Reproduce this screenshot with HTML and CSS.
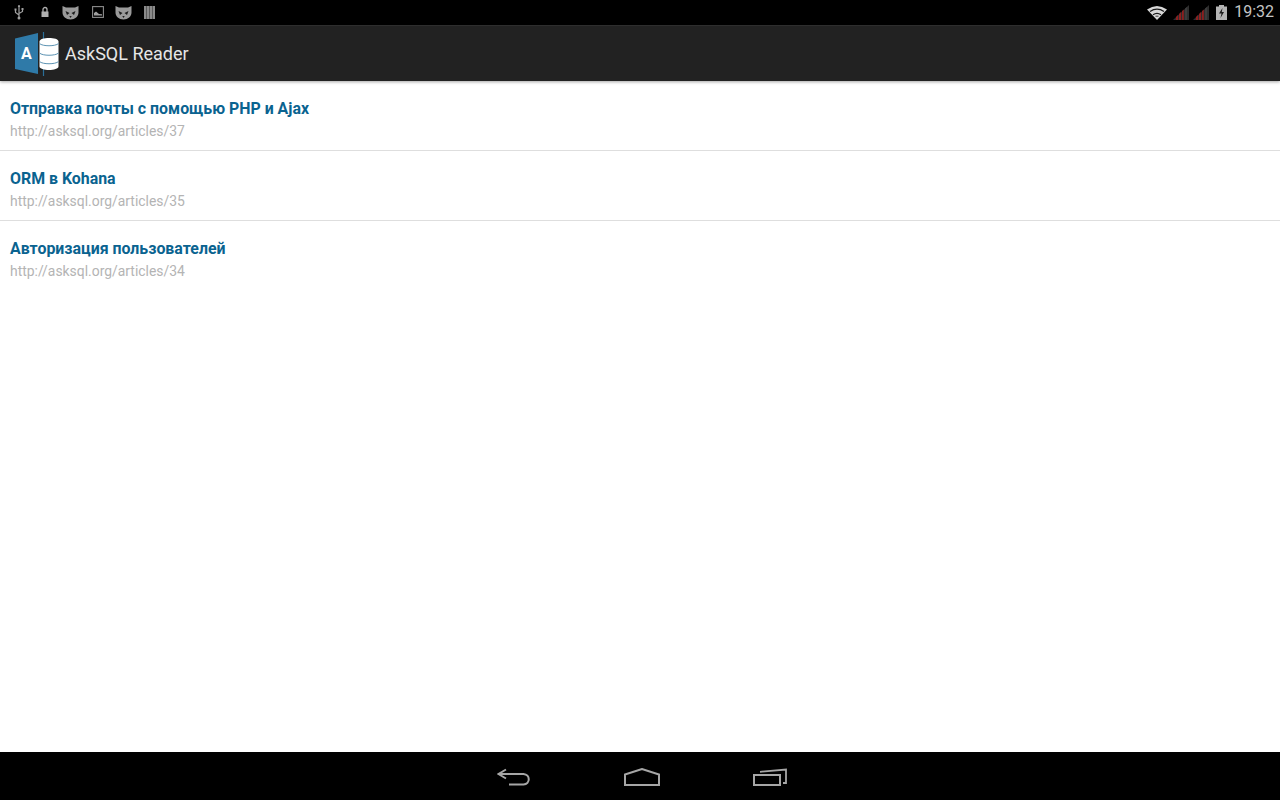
FILE: index.html
```html
<!DOCTYPE html>
<html lang="ru">
<head>
<meta charset="utf-8">
<title>AskSQL Reader</title>
<link rel="stylesheet" href="styles.css">
</head>
<body>
<div class="screen">
  <header class="status">
    <div class="status-left">
      <svg class="si usb" width="12" height="16" viewBox="0 0 12 16"><path d="M6 1v14M6 11L2.500 8.500V6M6 9.500l3.500-2V5.500" fill="none" stroke="#a0a0a0" stroke-width="1.200"/><circle cx="6" cy="14" r="1.500" fill="#a0a0a0"/><path d="M4.800 3L6 1l1.200 2z" fill="#a0a0a0"/><rect x="1.500" y="4.500" width="2" height="2" fill="#a0a0a0"/><rect x="8.500" y="4" width="2" height="2" fill="#a0a0a0"/></svg>
      <svg class="si lock" width="10" height="12" viewBox="0 0 10 12"><path d="M3 6V3.500a2 2 0 0 1 4 0V6" fill="none" stroke="#b0b0b0" stroke-width="1.300"/><rect x="1.500" y="5.500" width="7" height="5.500" fill="#b0b0b0"/></svg>
      <svg class="si cat1" width="17" height="15" viewBox="0 0 17 15"><path d="M.5 1l3.500 1.500h9L16.500 1v6.500c0 4-3.500 7-8 7s-8-3-8-7z" fill="#9a9a9a"/><path d="M3.500 6l4 2-2.500 2zM13.500 6l-4 2 2.500 2z" fill="#1c1c1c"/><path d="M7.300 11h2.400L8.500 13z" fill="#1c1c1c"/></svg>
      <svg class="si pic" width="12" height="12" viewBox="0 0 12 12"><rect x=".6" y=".6" width="10.800" height="10.800" fill="none" stroke="#8c8c8c" stroke-width="1.100"/><path d="M2 9.500V7l2-1.500L7 8l3 .2v1.300z" fill="#a0a0a0"/></svg>
      <svg class="si cat2" width="17" height="15" viewBox="0 0 17 15"><path d="M.5 1l3.500 1.500h9L16.500 1v6.500c0 4-3.500 7-8 7s-8-3-8-7z" fill="#9a9a9a"/><path d="M3.500 6l4 2-2.500 2zM13.500 6l-4 2 2.500 2z" fill="#1c1c1c"/><path d="M7.300 11h2.400L8.500 13z" fill="#1c1c1c"/></svg>
      <svg class="si bars" width="11" height="13" viewBox="0 0 11 13"><path d="M0 0h11v13H0z" fill="#8a8a8a"/><path d="M2.500 0v13M5.500 0v13M8.500 0v13" stroke="#5a5a5a" stroke-width="1"/></svg>
    </div>
    <div class="status-right">
      <svg class="wifi" width="20" height="15" viewBox="0 0 20 15"><path d="M0 4.500Q10-2.500 20 4.500L10 15z" fill="#d8d8d8"/><path d="M3 6.500Q10 1.800 17 6.500M6 9.800Q10 7 14 9.800" fill="none" stroke="#1a1a1a" stroke-width="1.300"/><path d="M8.500 11.200h3" stroke="#1a1a1a" stroke-width=".8"/></svg>
      <svg class="signal" width="16" height="15" viewBox="0 0 16 15"><path d="M0 15L16 0v15z" fill="#2e2e2e"/><path d="M3 15v-3l2-2v5zM6 15V9l2-2v8zM9 15V6l1.800-1.500V15z" fill="#8c1f1f"/><path d="M12 15V3.500L14 2v13z" fill="#3c3c3c"/></svg>
      <svg class="signal" width="16" height="15" viewBox="0 0 16 15"><path d="M0 15L16 0v15z" fill="#2e2e2e"/><path d="M3 15v-3l2-2v5zM6 15V9l2-2v8zM9 15V6l1.800-1.500V15z" fill="#8c1f1f"/><path d="M12 15V3.500L14 2v13z" fill="#3c3c3c"/></svg>
      <svg class="battery" width="11" height="15" viewBox="0 0 11 15"><path d="M3 0h5v1.500h3V15H0V1.500h3z" fill="#b4b4b4"/><path d="M6.500 3L3 8.500h2.500L4.500 13 8 7H5.800z" fill="#1c1c1c"/></svg>
      <span class="clock">19:32</span>
    </div>
  </header>
  <div class="actionbar">
    <svg class="logo" width="46" height="44" viewBox="0 0 46 44">
      <path d="M1 6.500L24 1v41L1 37z" fill="#2f7aa8"/>
      <path d="M29.500 0v44" stroke="#2a6f99" stroke-width="1.200"/>
      <path d="M25.500 9.500c0-4.600 19-4.600 19 0v25c0 4.600-19 4.600-19 0z" fill="#fff"/>
      <path d="M25.500 11.500c3 3 16 3 19 0M25.500 21c3 3 16 3 19 0M25.500 29.500c3 3 16 3 19 0" fill="none" stroke="#5c93b3" stroke-width="1"/>
      <text x="7" y="27" class="logo-a">A</text>
    </svg>
    <h1 class="app-title">AskSQL Reader</h1>
  </div>
  <main class="list">
    <a class="row"><span class="row-title">Отправка почты с помощью PHP и Ajax</span><span class="row-url">http://asksql.org/articles/37</span></a>
    <a class="row"><span class="row-title">ORM в Kohana</span><span class="row-url">http://asksql.org/articles/35</span></a>
    <a class="row row-last"><span class="row-title">Авторизация пользователей</span><span class="row-url">http://asksql.org/articles/34</span></a>
  </main>
  <nav class="navbar">
    <svg width="34" height="20" viewBox="0 0 34 20"><path d="M9 2.500L1.500 7 9 11.500M2 7h24.500c7 .5 7 10 0 10.500H12" fill="none" stroke="#a6a6a6" stroke-width="2"/></svg>
    <svg width="36" height="18" viewBox="0 0 36 18"><path d="M1 6.500L18 1l17 5.500V17H1z" fill="none" stroke="#a6a6a6" stroke-width="2"/></svg>
    <svg width="34" height="18" viewBox="0 0 34 18"><rect x="1" y="7" width="26" height="10" fill="none" stroke="#a6a6a6" stroke-width="2"/><path d="M7 3.800L33 1.500v13.500h-3" fill="none" stroke="#a6a6a6" stroke-width="1.800"/></svg>
  </nav>
</div>
</body>
</html>
```
FILE: styles.css
```css
* { box-sizing: border-box; }
html, body { margin: 0; padding: 0; }
body { background: #fff; font-family: Roboto, "Noto Sans", sans-serif; overflow: hidden; }
.screen { width: 1280px; height: 800px; display: flex; flex-direction: column; }

.status { height: 25px; flex: none; background: #000; display: flex; justify-content: space-between; align-items: center; padding: 0 6px 1px 13px; }
.status-left, .status-right { display: flex; align-items: center; }
.si { flex: none; display: block; }
.lock { margin-left: 15px; }
.cat1 { margin-left: 12px; }
.pic { margin-left: 13px; }
.cat2 { margin-left: 11px; }
.bars { margin-left: 12px; }
.status-right svg { display: block; flex: none; }
.wifi { margin-right: 6px; }
.signal { margin-right: 4px; margin-top: 1px; }
.battery { margin-left: 3px; margin-right: 7px; margin-top: 1px; }
.clock { color: #c4c4c4; font-size: 16px; line-height: 20px; }

.actionbar { height: 56px; flex: none; background: #222; border-top: 1px solid #2e2e2e; display: flex; align-items: center; padding-left: 14px; position: relative; box-shadow: 0 1px 3px rgba(0,0,0,.35); z-index: 1; }
.logo { flex: none; }
.logo-a { font: bold 16px Roboto, sans-serif; fill: #fff; }
.app-title { margin: 0 0 0 5px; font-weight: 400; font-size: 18px; line-height: 24px; color: #e6e6e6; }

.list { flex: 1; background: #fff; display: flex; flex-direction: column; }
.row { height: 70px; flex: none; padding: 18px 10px 0; border-bottom: 1px solid #dedede; display: flex; flex-direction: column; }
.row-last { border-bottom: 0; }
.row-title { font-weight: 700; font-size: 15.900px; line-height: 20px; color: #0a6390; }
.row-url { font-size: 13.900px; line-height: 18px; margin-top: 3px; color: #b4b4b4; }

.navbar { height: 48px; flex: none; background: #000; display: flex; justify-content: center; align-items: center; gap: 93px; padding: 2px 0 0 3px; }
```
